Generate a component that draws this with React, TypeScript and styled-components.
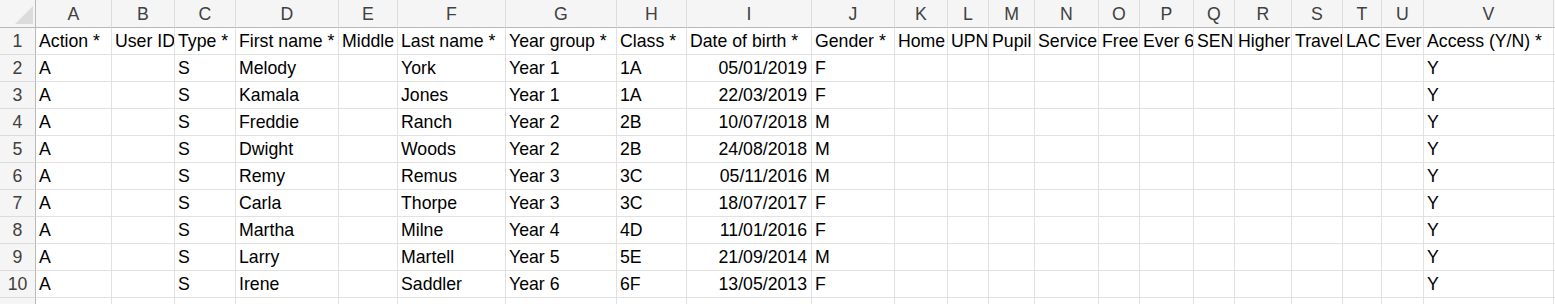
import React from "react";
import styled, { createGlobalStyle } from "styled-components";

const GlobalStyle = createGlobalStyle`
    html, body {
        margin: 0;
        padding: 0;
        background: #ffffff;
    }
`;

const columnWidths = [76, 63, 61, 103, 59, 108, 111, 70, 125, 83, 53, 41, 46, 64, 41, 54, 41, 57, 51, 39, 42, 130];
const letters = "ABCDEFGHIJKLMNOPQRSTUV".split("");

const headings = [
    "Action *", "User ID", "Type *", "First name *", "Middle", "Last name *", "Year group *", "Class *",
    "Date of birth *", "Gender *", "Home", "UPN", "Pupil", "Service", "Free", "Ever 6", "SEN", "Higher",
    "Travel", "LAC", "Ever", "Access (Y/N) *",
];

const pupils = [
    ["Melody", "York", "Year 1", "1A", "05/01/2019", "F"],
    ["Kamala", "Jones", "Year 1", "1A", "22/03/2019", "F"],
    ["Freddie", "Ranch", "Year 2", "2B", "10/07/2018", "M"],
    ["Dwight", "Woods", "Year 2", "2B", "24/08/2018", "M"],
    ["Remy", "Remus", "Year 3", "3C", "05/11/2016", "M"],
    ["Carla", "Thorpe", "Year 3", "3C", "18/07/2017", "F"],
    ["Martha", "Milne", "Year 4", "4D", "11/01/2016", "F"],
    ["Larry", "Martell", "Year 5", "5E", "21/09/2014", "M"],
    ["Irene", "Saddler", "Year 6", "6F", "13/05/2013", "F"],
];

const Viewport = styled.div`
    height: 100vh;
    overflow: hidden;
    font-family: "Liberation Sans", Arial, sans-serif;
    font-size: 17.7px;
    color: #000;
`;

const Sheet = styled.div`
    display: grid;
    grid-template-columns: 36px ${columnWidths.map((w) => `${w}px`).join(" ")} 1fr;
    grid-template-rows: 28px;
    grid-auto-rows: 27px;
`;

const Corner = styled.div`
    position: relative;
    background: #f5f5f5;
    border-right: 1px solid #b9b9b9;
    border-bottom: 1px solid #b9b9b9;

    &::after {
        content: "";
        position: absolute;
        right: 2px;
        bottom: 3px;
        width: 0;
        height: 0;
        border-left: 18px solid transparent;
        border-bottom: 18px solid #dcdcdc;
    }
`;

const ColHeader = styled.div`
    box-sizing: border-box;
    background: #f5f5f5;
    border-right: 1px solid #dcdcdc;
    border-bottom: 1px solid #b9b9b9;
    padding-top: 1px;
    text-align: center;
    line-height: 26px;
    color: #404040;
    overflow: hidden;
    white-space: nowrap;
`;

const RowHeader = styled.div`
    background: #f5f5f5;
    border-right: 1px solid #b9b9b9;
    border-bottom: 1px solid #dcdcdc;
    text-align: center;
    line-height: 26px;
    color: #404040;
`;

const Cell = styled.div<{ $align?: "left" | "right" }>`
    box-sizing: border-box;
    border-right: 1px solid #e1e1e1;
    border-bottom: 1px solid #e1e1e1;
    padding: 0 4px 0 3px;
    line-height: 26px;
    text-align: ${(p) => p.$align ?? "left"};
    overflow: hidden;
    white-space: nowrap;
`;

const buildRow = (p: string[]) => {
    const cells = Array(22).fill("");
    cells[0] = "A";
    cells[2] = "S";
    cells[3] = p[0];
    cells[5] = p[1];
    cells[6] = p[2];
    cells[7] = p[3];
    cells[8] = p[4];
    cells[9] = p[5];
    cells[21] = "Y";
    return cells;
};

const App: React.FC = () => {
    const rows = [headings, ...pupils.map(buildRow)];

    return (
        <Viewport>
            <GlobalStyle />
            <Sheet>
                <Corner />
                {letters.map((l) => (
                    <ColHeader key={l}>{l}</ColHeader>
                ))}
                <ColHeader />
                {rows.map((row, r) => (
                    <React.Fragment key={r}>
                        <RowHeader>{r + 1}</RowHeader>
                        {row.map((value, c) => (
                            <Cell key={c} $align={r > 0 && c === 8 ? "right" : "left"}>
                                {value}
                            </Cell>
                        ))}
                        <Cell />
                    </React.Fragment>
                ))}
                {/* next row only peeks in at the bottom edge */}
                <RowHeader />
                {letters.map((l) => (
                    <Cell key={l} />
                ))}
                <Cell />
            </Sheet>
        </Viewport>
    );
};

export default App;
